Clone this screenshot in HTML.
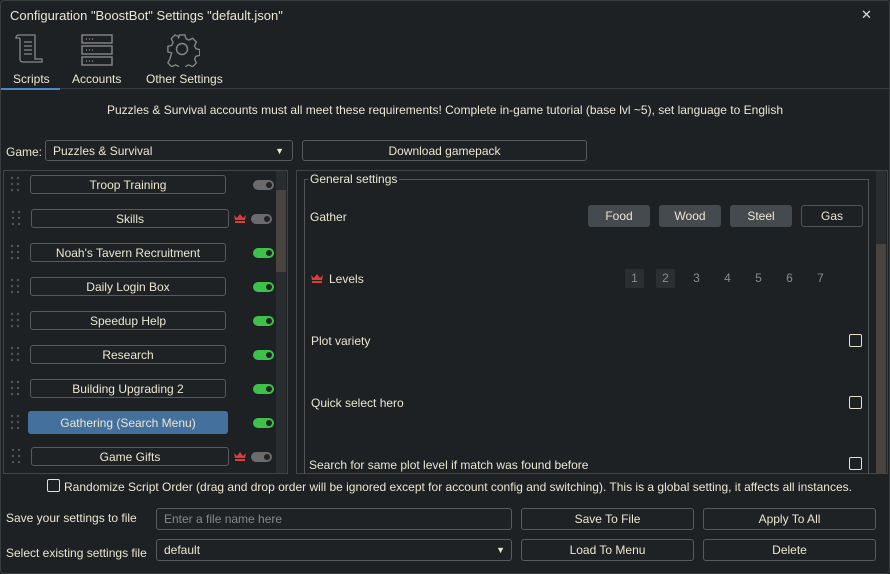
<!DOCTYPE html>
<html><head><meta charset="utf-8"><style>
*{box-sizing:border-box;margin:0;padding:0}
body{width:890px;height:574px;background:#1e2124;font-family:"Liberation Sans",sans-serif;font-size:12px;color:#ece6d2;position:relative;overflow:hidden}
.a{position:absolute}
.btn{position:absolute;border:1px solid #5a5a5a;border-radius:3px;background:#1f2225;text-align:center;color:#ece6d2;font-size:12px}
.dots{position:absolute;width:12px;height:18px;background-image:radial-gradient(circle at 3px 3px,#555 1px,transparent 1.4px);background-size:6px 6px}
.tg{position:absolute;width:21px;height:10px;border-radius:5px;background:#6b6b6b}
.tg::after{content:"";position:absolute;right:2px;top:2px;width:6px;height:6px;border-radius:3px;background:#222}
.tg.on{background:#3ec14a}
.cb{position:absolute;width:13px;height:13px;border:1px solid #e8e2c8;border-radius:2px}
.crown{position:absolute;width:12px;height:10px}
.rb{position:absolute;height:22px;border-radius:3px;background:#444a4e;text-align:center;line-height:23px;font-size:12px}
.num{position:absolute;width:19px;height:19px;text-align:center;line-height:19px;color:#8a8a8a;font-size:12px;border-radius:2px}
.r{line-height:19px!important}
</style></head><body>
<div class="a" style="left:0;top:0;width:890px;height:574px;border:1px solid #3a3d40;border-radius:4px"></div>
<div class="a" style="left:10px;top:8px;font-size:13px">Configuration "BoostBot" Settings "default.json"</div>
<div class="a" style="left:861px;top:7px;font-size:13px;color:#ddd">✕</div>

<svg class="a" style="left:14px;top:33px" width="30" height="32" viewBox="0 0 30 32" fill="none" stroke="#888" stroke-width="1.3">
<path d="M5 2h16v24h7v3H9c-2 0-3-1-3-3V5"/><path d="M5 2c-2 0-3 1-3 3h4"/><path d="M10 9h8M10 13h8M10 17h8M10 21h8"/></svg>
<svg class="a" style="left:80px;top:34px" width="34" height="32" viewBox="0 0 34 32" fill="none" stroke="#888" stroke-width="1.4">
<rect x="2" y="1" width="30" height="8"/><rect x="2" y="12" width="30" height="8"/><rect x="2" y="23" width="30" height="8"/>
<path d="M6 5h1M9 5h1M12 5h1M6 16h1M9 16h1M12 16h1M6 27h1M9 27h1M12 27h1"/></svg>
<svg class="a" style="left:166px;top:33px" width="34" height="34" viewBox="0 0 34 34" fill="none" stroke="#888" stroke-width="1.4">
<path d="M14 2h6l1 4 3 1.5 4-2 4 4-2 4 1.5 3 4 1v6l-4 1-1.5 3 2 4-4 4-4-2-3 1.5-1 4h-6l-1-4-3-1.5-4 2-4-4 2-4L6 21l-4-1v-6l4-1 1.5-3-2-4 4-4 4 2L13 6z" transform="scale(0.95)"/><circle cx="16" cy="16" r="5.5"/></svg>
<div class="a" style="left:13px;top:72px">Scripts</div>
<div class="a" style="left:72px;top:72px">Accounts</div>
<div class="a" style="left:146px;top:72px">Other Settings</div>
<div class="a" style="left:1px;top:88px;width:888px;height:1px;background:#3a3d40"></div>
<div class="a" style="left:1px;top:88px;width:59px;height:2px;background:#4a88c7"></div>

<div class="a" style="left:0;top:103px;width:890px;text-align:center">Puzzles &amp; Survival accounts must all meet these requirements! Complete in-game tutorial (base lvl ~5), set language to English</div>

<div class="a" style="left:6px;top:145px">Game:</div>
<div class="btn" style="left:45px;top:140px;width:248px;height:21px;text-align:left;padding-left:7px;line-height:20px">Puzzles &amp; Survival<span style="position:absolute;right:8px;top:0;font-size:9px">▼</span></div>
<div class="btn" style="left:302px;top:140px;width:285px;height:21px;line-height:20px">Download gamepack</div>

<div class="a" style="left:3px;top:170px;width:285px;height:304px;border:1px solid #444"></div>
<div class="a" style="left:276px;top:171px;width:10px;height:302px;background:#2a2d30"></div>
<div class="a" style="left:276px;top:190px;width:10px;height:82px;background:#4a4440"></div>

<div class="dots" style="left:9px;top:175px"></div><div class="btn r" style="left:30px;top:175px;width:196px;height:19px">Troop Training</div><div class="tg" style="left:253px;top:180px"></div>
<div class="dots" style="left:10px;top:209px"></div><div class="btn r" style="left:31px;top:209px;width:198px;height:19px">Skills</div>
<svg class="crown" style="left:234px;top:213px" viewBox="0 0 12 10"><path d="M0 2l3 3 3-4 3 4 3-3-1 5H1z" fill="#e53935"/><rect x="1" y="8" width="10" height="2" fill="#e53935"/></svg><div class="tg" style="left:251px;top:214px"></div>
<div class="dots" style="left:9px;top:243px"></div><div class="btn r" style="left:30px;top:243px;width:196px;height:19px">Noah's Tavern Recruitment</div><div class="tg on" style="left:253px;top:248px"></div>
<div class="dots" style="left:9px;top:277px"></div><div class="btn r" style="left:30px;top:277px;width:196px;height:19px">Daily Login Box</div><div class="tg on" style="left:253px;top:282px"></div>
<div class="dots" style="left:9px;top:311px"></div><div class="btn r" style="left:30px;top:311px;width:196px;height:19px">Speedup Help</div><div class="tg on" style="left:253px;top:316px"></div>
<div class="dots" style="left:9px;top:345px"></div><div class="btn r" style="left:30px;top:345px;width:196px;height:19px">Research</div><div class="tg on" style="left:253px;top:350px"></div>
<div class="dots" style="left:9px;top:379px"></div><div class="btn r" style="left:30px;top:379px;width:196px;height:19px">Building Upgrading 2</div><div class="tg on" style="left:253px;top:384px"></div>
<div class="dots" style="left:9px;top:413px"></div><div class="btn" style="left:28px;top:411px;width:200px;height:23px;line-height:23px;background:#44709e;border-color:#44709e">Gathering (Search Menu)</div><div class="tg on" style="left:253px;top:418px"></div>
<div class="dots" style="left:10px;top:447px"></div><div class="btn r" style="left:31px;top:447px;width:198px;height:19px">Game Gifts</div>
<svg class="crown" style="left:234px;top:451px" viewBox="0 0 12 10"><path d="M0 2l3 3 3-4 3 4 3-3-1 5H1z" fill="#e53935"/><rect x="1" y="8" width="10" height="2" fill="#e53935"/></svg><div class="tg" style="left:251px;top:452px"></div>

<div class="a" style="left:296px;top:170px;width:592px;height:304px;border:1px solid #444"></div>
<div class="a" style="left:876px;top:171px;width:10px;height:302px;background:#2a2d30"></div>
<div class="a" style="left:876px;top:244px;width:10px;height:229px;background:#4a4440"></div>
<div class="a" style="left:304px;top:179px;width:565px;height:295px;border:1px solid #555;border-bottom:none"></div>
<div class="a" style="left:308px;top:172px;background:#1e2124;padding:0 2px">General settings</div>

<div class="a" style="left:310px;top:210px">Gather</div>
<div class="rb" style="left:588px;top:205px;width:62px">Food</div>
<div class="rb" style="left:659px;top:205px;width:62px">Wood</div>
<div class="rb" style="left:730px;top:205px;width:62px">Steel</div>
<div class="rb" style="left:801px;top:205px;width:62px;background:#1e2124;border:1px solid #555;line-height:21px">Gas</div>

<svg class="crown" style="left:311px;top:273px" viewBox="0 0 12 10"><path d="M0 2l3 3 3-4 3 4 3-3-1 5H1z" fill="#e53935"/><rect x="1" y="8" width="10" height="2" fill="#e53935"/></svg>
<div class="a" style="left:329px;top:272px">Levels</div>
<div class="num" style="left:625px;top:269px;background:#2b2f32">1</div>
<div class="num" style="left:656px;top:269px;background:#2b2f32">2</div>
<div class="num" style="left:687px;top:269px">3</div>
<div class="num" style="left:718px;top:269px">4</div>
<div class="num" style="left:749px;top:269px">5</div>
<div class="num" style="left:780px;top:269px">6</div>
<div class="num" style="left:811px;top:269px">7</div>

<div class="a" style="left:311px;top:334px">Plot variety</div><div class="cb" style="left:849px;top:334px"></div>
<div class="a" style="left:311px;top:396px">Quick select hero</div><div class="cb" style="left:849px;top:396px"></div>
<div class="a" style="left:309px;top:458px">Search for same plot level if match was found before</div><div class="cb" style="left:849px;top:457px"></div>

<div class="cb" style="left:47px;top:479px"></div>
<div class="a" style="left:64px;top:480px">Randomize Script Order (drag and drop order will be ignored except for account config and switching). This is a global setting, it affects all instances.</div>

<div class="a" style="left:6px;top:511px">Save your settings to file</div>
<div class="btn" style="left:156px;top:508px;width:356px;height:22px;text-align:left;padding-left:7px;line-height:21px;color:#888">Enter a file name here</div>
<div class="btn" style="left:521px;top:508px;width:173px;height:22px;line-height:21px">Save To File</div>
<div class="btn" style="left:703px;top:508px;width:173px;height:22px;line-height:21px">Apply To All</div>

<div class="a" style="left:6px;top:546px">Select existing settings file</div>
<div class="btn" style="left:156px;top:539px;width:356px;height:22px;text-align:left;padding-left:7px;line-height:20px">default<span style="position:absolute;right:6px;top:0;font-size:9px">▼</span></div>
<div class="btn" style="left:521px;top:539px;width:173px;height:22px;line-height:21px">Load To Menu</div>
<div class="btn" style="left:703px;top:539px;width:173px;height:22px;line-height:21px">Delete</div>
</body></html>
